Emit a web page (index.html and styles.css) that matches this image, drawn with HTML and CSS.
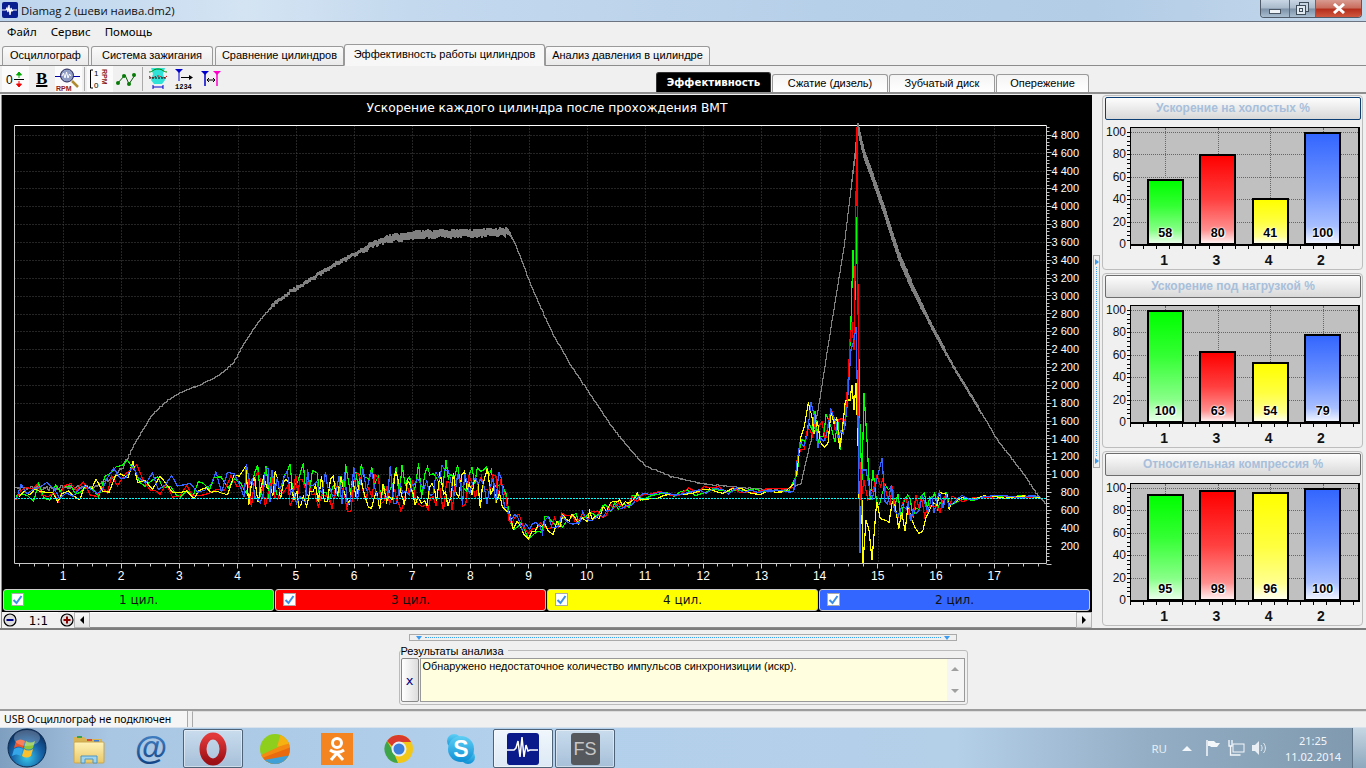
FILE: index.html
```html
<!DOCTYPE html>
<html lang="ru">
<head>
<meta charset="utf-8">
<title>Diamag 2</title>
<link rel="stylesheet" href="styles.css">
</head>
<body>
<div class="app">
  <header class="titlebar">
    <svg class="app-icon" width="16" height="16" viewBox="0 0 16 16"><rect width="16" height="16" rx="2" fill="#0a1f8f"/><path d="M0 8h4l1-2 1 4 1-7 1 10 1-7 1 3 1-1h4" fill="none" stroke="#fff" stroke-width="1.2"/></svg>
    <span class="title-text">Diamag 2 (шеви наива.dm2)</span>
    <div class="win-controls">
      <div class="wc wc-min"><i></i></div>
      <div class="wc wc-max"><svg width="13" height="13" viewBox="0 0 13 13"><rect x="3.500" y=".5" width="9" height="9" fill="#c6d3e0" stroke="#3f4c5a"/><rect x=".5" y="3.500" width="9" height="9" fill="#dfe7ef" stroke="#3f4c5a"/><rect x="3.500" y="6.500" width="3" height="3" fill="none" stroke="#3f4c5a"/></svg></div>
      <div class="wc wc-close"><svg width="14" height="11" viewBox="0 0 14 11"><path d="M2 1l10 9M12 1L2 10" stroke="#fff" stroke-width="3"/></svg></div>
    </div>
  </header>
  <nav class="menu"><span>Файл</span><span>Сервис</span><span>Помощь</span></nav>
  <div class="tabs">
    <div class="tab t1">Осциллограф</div>
    <div class="tab t2">Система зажигания</div>
    <div class="tab t3">Сравнение цилиндров</div>
    <div class="tab active t4">Эффективность работы цилиндров</div>
    <div class="tab t5">Анализ давления в цилиндре</div>
  </div>
  <div class="toolbar">
    <div class="tool on">
      <svg width="20" height="20" viewBox="0 0 20 20"><text x="1" y="15" class="ti-zero">0</text><path d="M9 10.500h10" stroke="#000"/><path d="M14 9V4M11.500 6L14 3l2.500 3z" fill="#0a0" stroke="#0a0"/><path d="M14 12v5M11.500 15l2.500 3 2.500-3z" fill="#e00" stroke="#e00"/></svg>
    </div>
    <div class="tool"><span class="ti-b">B</span></div>
    <div class="tool on">
      <svg width="26" height="26" viewBox="0 0 26 26"><path d="M0 10.500h25" stroke="#00a"/><circle cx="12" cy="9.500" r="6.500" fill="#8f9cc4" stroke="#225"/><path d="M7 10l1.500-3 1.500 5 1.500-6 1.500 6 1.500-4 1.500 2" fill="none" stroke="#fff"/><path d="M17 15l6 6" stroke="#b08a30" stroke-width="2.500"/><text x="1" y="25" class="ti-rpm">RPM</text></svg>
    </div>
    <i class="tsep"></i>
    <div class="tool on">
      <svg width="24" height="24" viewBox="0 0 24 24"><path d="M5 3H2.500v18H5" fill="none" stroke="#000"/><text x="6" y="9" class="ti-small">1</text><text x="6" y="21" class="ti-small">0</text><text x="0" y="0" transform="translate(14 2) rotate(90)" class="ti-rot">RPM</text></svg>
    </div>
    <div class="tool">
      <svg width="22" height="20" viewBox="0 0 22 20"><path d="M2 15L10 6l4 9 6-9" fill="none" stroke="#0a5a0a"/><circle cx="3" cy="14" r="2" fill="#087a08"/><circle cx="9" cy="7" r="2" fill="#087a08"/><circle cx="14" cy="15" r="2" fill="#087a08"/><circle cx="19" cy="6" r="2" fill="#087a08"/></svg>
    </div>
    <i class="tsep"></i>
    <div class="tool">
      <svg width="20" height="24" viewBox="0 0 20 24"><path d="M3 1h14l-2 6 2 6-3 4H6l-3-4 2-6z" fill="#2fe3d8"/><path d="M1 5c4 0 4-3 9-3s5 3 9 3" fill="none" stroke="#080"/><path d="M1 9c4 4 5 0 9 0s5 4 9 0" fill="none" stroke="#d00" stroke-dasharray="2 1"/><path d="M1 11h18" stroke="#000" stroke-dasharray="2 1"/><path d="M5 20h10M5 18v4M15 18v4" stroke="#00c"/></svg>
    </div>
    <div class="tool">
      <svg width="22" height="22" viewBox="0 0 22 22"><path d="M2 1h8L6 5z" fill="#00c"/><path d="M6 4v9" stroke="#00c"/><path d="M8 9.500h9" stroke="#000"/><path d="M16 7l4 2.500-4 2.500z"/><text x="2" y="21" class="ti-num">1234</text></svg>
    </div>
    <div class="tool">
      <svg width="22" height="22" viewBox="0 0 22 22"><path d="M1 3h8L5 7z" fill="#00c"/><path d="M5 6v12" stroke="#00c" stroke-width="1.500"/><path d="M13 3h8l-4 4z" fill="#f0c"/><path d="M17 6v12" stroke="#f0c" stroke-width="1.500"/><path d="M7 12h8M9 10l-2 2 2 2M13 10l2 2-2 2" fill="none" stroke="#000"/></svg>
    </div>
    <div class="subtabs">
      <div class="subtab sub-active">Эффективность</div>
      <div class="subtab s2">Сжатие (дизель)</div>
      <div class="subtab s3">Зубчатый диск</div>
      <div class="subtab s4">Опережение</div>
    </div>
  </div>

  <main class="workspace">
    <div class="left">
      <div class="chart">
        <svg id="plot" class="plot-svg" width="1090" height="494" viewBox="2 95 1090 494"></svg>
        <div class="legend">
          <div class="leg green"><span class="check"><svg width="11" height="10" viewBox="0 0 11 10"><path d="M1.500 5l3 3 5-7" fill="none" stroke="#3b8fe8" stroke-width="2"/></svg></span>1 цил.</div>
          <div class="leg red"><span class="check"><svg width="11" height="10" viewBox="0 0 11 10"><path d="M1.500 5l3 3 5-7" fill="none" stroke="#3b8fe8" stroke-width="2"/></svg></span>3 цил.</div>
          <div class="leg yellow"><span class="check"><svg width="11" height="10" viewBox="0 0 11 10"><path d="M1.500 5l3 3 5-7" fill="none" stroke="#3b8fe8" stroke-width="2"/></svg></span>4 цил.</div>
          <div class="leg blue"><span class="check"><svg width="11" height="10" viewBox="0 0 11 10"><path d="M1.500 5l3 3 5-7" fill="none" stroke="#3b8fe8" stroke-width="2"/></svg></span>2 цил.</div>
        </div>
      </div>
      <div class="scrollrow">
        <svg class="zoom-btn" width="14" height="14" viewBox="0 0 14 14"><circle cx="7" cy="7" r="6" fill="#ddd" stroke="#000" stroke-width="1.200"/><path d="M3.500 7h7" stroke="#008" stroke-width="2"/></svg>
        <div class="ratio">1:1</div>
        <svg class="zoom-btn" width="14" height="14" viewBox="0 0 14 14"><circle cx="7" cy="7" r="6" fill="#ddd" stroke="#000" stroke-width="1.200"/><path d="M3.500 7h7M7 3.500v7" stroke="#800" stroke-width="2"/></svg>
        <div class="sb-btn"><i class="arrow-l"></i></div>
        <div class="sb-track"></div>
        <div class="sb-btn"><i class="arrow-r"></i></div>
      </div>
    </div>

    <div class="vsplit"><i class="mark-r"></i><i class="dots"></i><i class="mark-r"></i></div>

    <aside class="gauges">
      <section class="gauge">
        <h3 class="gauge-title focus">Ускорение на холостых %</h3>
        <div class="gauge-body">
          <div class="yaxis"><span>100</span><span>80</span><span>60</span><span>40</span><span>20</span><span>0</span></div>
          <div class="yticks"></div>
          <div class="plotbox">
            <div class="hgrid"><i></i><i></i><i></i><i></i><i></i></div>
            <div class="bars">
              <div class="slot"><div class="bar b-green" style="height:58%"><b>58</b></div></div>
              <div class="slot"><div class="bar b-red" style="height:80%"><b>80</b></div></div>
              <div class="slot"><div class="bar b-yellow" style="height:41%"><b>41</b></div></div>
              <div class="slot"><div class="bar b-blue" style="height:100%"><b>100</b></div></div>
            </div>
          </div>
        </div>
        <div class="xticks"></div>
        <div class="cats"><span>1</span><span>3</span><span>4</span><span>2</span></div>
      </section>
      <section class="gauge">
        <h3 class="gauge-title">Ускорение под нагрузкой %</h3>
        <div class="gauge-body">
          <div class="yaxis"><span>100</span><span>80</span><span>60</span><span>40</span><span>20</span><span>0</span></div>
          <div class="yticks"></div>
          <div class="plotbox">
            <div class="hgrid"><i></i><i></i><i></i><i></i><i></i></div>
            <div class="bars">
              <div class="slot"><div class="bar b-green" style="height:100%"><b>100</b></div></div>
              <div class="slot"><div class="bar b-red" style="height:63%"><b>63</b></div></div>
              <div class="slot"><div class="bar b-yellow" style="height:54%"><b>54</b></div></div>
              <div class="slot"><div class="bar b-blue" style="height:79%"><b>79</b></div></div>
            </div>
          </div>
        </div>
        <div class="xticks"></div>
        <div class="cats"><span>1</span><span>3</span><span>4</span><span>2</span></div>
      </section>
      <section class="gauge">
        <h3 class="gauge-title">Относительная компрессия %</h3>
        <div class="gauge-body">
          <div class="yaxis"><span>100</span><span>80</span><span>60</span><span>40</span><span>20</span><span>0</span></div>
          <div class="yticks"></div>
          <div class="plotbox">
            <div class="hgrid"><i></i><i></i><i></i><i></i><i></i></div>
            <div class="bars">
              <div class="slot"><div class="bar b-green" style="height:95%"><b>95</b></div></div>
              <div class="slot"><div class="bar b-red" style="height:98%"><b>98</b></div></div>
              <div class="slot"><div class="bar b-yellow" style="height:96%"><b>96</b></div></div>
              <div class="slot"><div class="bar b-blue" style="height:100%"><b>100</b></div></div>
            </div>
          </div>
        </div>
        <div class="xticks"></div>
        <div class="cats"><span>1</span><span>3</span><span>4</span><span>2</span></div>
      </section>
    </aside>
  </main>

  <div class="results-area">
    <div class="hsplit"><i class="mark-d"></i><i class="hdots"></i><i class="mark-d"></i></div>
    <div class="group">
      <span class="group-label">Результаты анализа</span>
      <div class="group-row">
        <div class="x-btn">x</div>
        <div class="memo">
          <div class="memo-text">Обнаружено недостаточное количество импульсов синхронизиции (искр).</div>
          <div class="memo-sb"><i class="arrow-u"></i><i class="arrow-d"></i></div>
        </div>
      </div>
    </div>
  </div>

  <footer class="status">
    <div class="st-main">USB Осциллограф не подключен</div>
    <div class="st-rest"></div>
  </footer>

  <div class="taskbar">
    <div class="orb">
      <svg width="40" height="40" viewBox="0 0 40 40">
        <defs><radialGradient id="og" cx=".5" cy=".75" r=".7"><stop offset="0" stop-color="#37c6e8"/><stop offset=".55" stop-color="#1763a8"/><stop offset="1" stop-color="#0b2f5f"/></radialGradient></defs>
        <circle cx="20" cy="20" r="19" fill="url(#og)" stroke="#0e2a4c"/>
        <path d="M9 13c3-2 6-2 9 0l-2 7c-3-2-6-2-9 0z" fill="#f0562a"/>
        <path d="M19 13c3 2 6 2 9 0l-2 7c-3 2-6 2-9 0z" fill="#8cc63f"/>
        <path d="M7 21c3-2 6-2 9 0l-2 7c-3-2-6-2-9 0z" fill="#35a7e8"/>
        <path d="M17 21c3 2 6 2 9 0l-2 7c-3 2-6 2-9 0z" fill="#fbc02d"/>
        <ellipse cx="20" cy="10" rx="13" ry="8" fill="#fff" opacity=".25"/>
      </svg>
    </div>
    <div class="tb-item">
      <svg width="32" height="30" viewBox="0 0 32 30">
        <defs><linearGradient id="fg" x1="0" x2="0" y1="0" y2="1"><stop offset="0" stop-color="#fff3b8"/><stop offset="1" stop-color="#e9c766"/></linearGradient></defs>
        <path d="M1 3h10l2 2h16v10H1z" fill="#d9b453"/>
        <rect x="4" y="2" width="5" height="2" fill="#3aa24a"/><rect x="14" y="5" width="5" height="2" fill="#d94a3a"/><rect x="21" y="6" width="5" height="2" fill="#3a7ad9"/>
        <rect x="1" y="8" width="30" height="21" rx="1" fill="url(#fg)" stroke="#caa64e"/>
        <path d="M8 22h16v7h-4v-4h-8v4H8z" fill="#9fd4ef" stroke="#4e95c2"/>
      </svg>
    </div>
    <div class="tb-item">
      <svg class="at-icon" width="44" height="38" viewBox="0 0 44 38">
        <defs><linearGradient id="ag" x1="0" x2="0" y1="0" y2="1"><stop offset="0" stop-color="#4a8ccf"/><stop offset="1" stop-color="#0f3f80"/></linearGradient></defs>
        <text x="22" y="29" text-anchor="middle" class="ti-at" fill="url(#ag)">@</text>
      </svg>
    </div>
    <div class="tb-item running">
      <svg width="28" height="34" viewBox="0 0 28 34">
        <defs><linearGradient id="opg" x1="0" x2="0" y1="0" y2="1"><stop offset="0" stop-color="#e23a3a"/><stop offset="1" stop-color="#9c0f14"/></linearGradient></defs>
        <ellipse cx="14" cy="17" rx="10" ry="13" fill="none" stroke="url(#opg)" stroke-width="7"/>
      </svg>
    </div>
    <div class="tb-item">
      <svg width="32" height="32" viewBox="0 0 32 32">
        <defs><clipPath id="bc"><circle cx="16" cy="16" r="15"/></clipPath></defs>
        <g clip-path="url(#bc)"><rect width="32" height="32" fill="#8ecf1e"/><path d="M0 23L32 8v8L4 32H0z" fill="#f58a12"/><path d="M22 0h10v10L18 14z" fill="#f5b211"/><path d="M0 32V26l32-12v18z" fill="#e96a0f"/><path d="M0 28l32-6v10H0z" fill="#3fa0d8"/></g>
      </svg>
    </div>
    <div class="tb-item">
      <div class="ok-logo">
        <svg width="32" height="32" viewBox="0 0 32 32"><rect width="32" height="32" fill="#f48420"/><circle cx="16" cy="10" r="4.500" fill="none" stroke="#fff" stroke-width="3"/><path d="M9 17c4 3 10 3 14 0M16 20l-6 7M16 20l6 7" fill="none" stroke="#fff" stroke-width="3"/></svg>
      </div>
    </div>
    <div class="tb-item">
      <svg width="30" height="30" viewBox="0 0 30 30">
        <circle cx="15" cy="15" r="14" fill="#f2c718"/>
        <path d="M15 1a14 14 0 0 1 12.100 7H15a7 7 0 0 0-6.500 4.500L3 7a14 14 0 0 1 12-6z" fill="#d93a2c"/>
        <path d="M3 7l6 10 5 12A14 14 0 0 1 3 7z" fill="#3ea44a"/>
        <circle cx="15" cy="15" r="6.500" fill="#3b7fdb" stroke="#e8eef6" stroke-width="2"/>
      </svg>
    </div>
    <div class="tb-item">
      <svg width="30" height="32" viewBox="0 0 30 32">
        <defs><linearGradient id="sk" x1="0" x2="0" y1="0" y2="1"><stop offset="0" stop-color="#5fd0f5"/><stop offset="1" stop-color="#0e8fd4"/></linearGradient></defs>
        <circle cx="8" cy="8" r="7" fill="url(#sk)"/><circle cx="22" cy="24" r="7" fill="url(#sk)"/><circle cx="15" cy="16" r="13" fill="url(#sk)"/>
        <text x="15" y="24" text-anchor="middle" class="ti-s">S</text>
      </svg>
    </div>
    <div class="tb-item running active-app">
      <svg width="32" height="32" viewBox="0 0 32 32"><rect width="32" height="32" rx="3" fill="#0a1a8a"/><path d="M0 17h7l2-2 2-7 2 16 2-20 2 20 2-12 2 6 2-1 8 0" fill="none" stroke="#fff" stroke-width="1.500"/></svg>
    </div>
    <div class="tb-item running">
      <div class="fs-logo">FS</div>
    </div>
    <div class="tray">
      <span class="lang">RU</span>
      <i class="tray-up"></i>
      <svg width="16" height="18" viewBox="0 0 16 18"><path d="M2 1v16" stroke="#f4f7fa" stroke-width="1.500"/><path d="M3 2h6l2 2h4l-3 4H6L5 7H3z" fill="#f4f7fa"/></svg>
      <svg width="18" height="18" viewBox="0 0 18 18"><rect x="6" y="5" width="11" height="8" fill="none" stroke="#f4f7fa"/><path d="M2 1v6h3V1M3.500 7v9h10" fill="none" stroke="#f4f7fa" stroke-width="1.300"/></svg>
      <svg width="18" height="18" viewBox="0 0 18 18"><path d="M1 6h3l4-4v14l-4-4H1z" fill="#e8eef4"/><path d="M10 6c1.500 2 1.500 4 0 6M12.500 4c2.500 3 2.500 7 0 10" fill="none" stroke="#e8eef4"/></svg>
      <div class="clock"><span>21:25</span><span>11.02.2014</span></div>
      <div class="show-desktop"></div>
    </div>
  </div>
</div>
<script src="app.js"></script>
</body>
</html>
```
FILE: styles.css
```css
* { box-sizing: border-box; }
html, body { margin: 0; padding: 0; height: 100%; overflow: hidden; }
body { font-family: "Liberation Sans", "Noto Sans", sans-serif; font-size: 11px; color: #000; background: #f0f0f0; }
.app { width: 1366px; height: 768px; display: flex; flex-direction: column; }

.titlebar { height: 22px; display: flex; align-items: center; padding-left: 2px; border-bottom: 1px solid #6b7480; flex: none;
  background: linear-gradient(90deg, #bcd4ec 0%, #d4e4f3 18%, #c4d9ee 30%, #b7d0e9 60%, #b3cde7 80%, #c3d7ea 100%); position: relative; }
.app-icon { margin-top: -1px; }
.title-text { margin-left: 3px; font-size: 11.400px; font-family: "Open Sans", "Noto Sans", sans-serif; color: #111; line-height: 20px; }
.win-controls { position: absolute; right: 4px; top: 0; width: 102px; height: 18px; display: flex; border: 1px solid #4f5b69; border-top: 0; border-radius: 0 0 4px 4px; overflow: hidden; }
.wc { display: flex; align-items: center; justify-content: center; }
.wc-min, .wc-max { background: linear-gradient(#c9d6e4 0%, #a9bacb 48%, #7d91a7 52%, #a9bdd0 100%); border-right: 1px solid #5d6a7a; }
.wc-min { width: 29px; } .wc-max { width: 26px; }
.wc-close { flex: 1; background: linear-gradient(#d99a90 0%, #c96f60 45%, #b5301c 55%, #d0573f 100%); }
.wc-min i { width: 12px; height: 5px; margin-top: 5px; background: #eef3f8; border: 1px solid #4a5663; }

.menu { height: 21px; display: flex; background: #f0f0f0; padding: 0 0 0 7px; gap: 14px; font: 11.500px/20px "Noto Sans", sans-serif; flex: none; }
.tabs { height: 23px; display: flex; align-items: flex-end; border-bottom: 1px solid #8c8c8c; padding-left: 2px; background: #f0f0f0; flex: none; }
.tab { height: 20px; margin-bottom: -1px; border: 1px solid #9a9a9a; border-bottom: 1px solid #8c8c8c; border-radius: 3px 3px 0 0; background: linear-gradient(#fafafa, #eaeaea); text-align: center; line-height: 17px; white-space: nowrap; }
.t1 { width: 87px; } .t2 { width: 122px; margin-left: 2px; } .t3 { width: 129px; margin-left: 2px; }
.t4 { width: 201px; height: 22px; line-height: 18px; background: #f7f7f7; border-bottom-color: #f7f7f7; }
.t5 { width: 165px; }

.toolbar { height: 28px; display: flex; align-items: stretch; padding-left: 2px; border-bottom: 2px solid #8e8e8e; background: #f0f0f0; position: relative; flex: none; }
.tool { width: 26.500px; display: flex; align-items: center; justify-content: center; }
.tool.on { background: #fbfbfb; }
.tsep { width: 1px; margin: 1px 2px; background: #aaa; }
.subtabs { margin-left: auto; margin-right: 277px; align-self: flex-end; display: flex; gap: 1px; align-items: flex-end; }
.subtab { height: 18px; border: 1px solid #9a9a9a; border-bottom: 0; border-radius: 3px 3px 0 0; background: linear-gradient(#f4f4f4, #fff); text-align: center; line-height: 17px; white-space: nowrap; }
.sub-active { height: 20px; width: 115px; background: #000; color: #fff; font-weight: 700; font-family: "DejaVu Sans", sans-serif; font-size: 10.200px; line-height: 20px; border-color: #333; }
.s2 { width: 116px; } .s3 { width: 106px; } .s4 { width: 93px; }
.ti-zero { font: 12px "Liberation Sans", sans-serif; }
.ti-b { font: 700 17px "Liberation Serif", serif; text-decoration: underline; text-decoration-thickness: 2px; line-height: 20px; }
.ti-rpm { font: 700 7px "Liberation Sans", sans-serif; fill: #8b1a1a; }
.ti-small { font: 8px "Liberation Sans", sans-serif; }
.ti-rot { font: 700 7px "Liberation Sans", sans-serif; fill: #8b1a1a; }
.ti-num { font: 700 7px "Liberation Mono", monospace; }
.at-icon { flex: none; margin: 0 -4px; }
.ti-at { font: 700 33px "Liberation Sans", sans-serif; }
.ti-s { font: 700 23px "Liberation Sans", sans-serif; fill: #fff; }

.workspace { height: 536px; display: flex; padding: 1px 3px 0 2px; border-bottom: 2px solid #7c7c7c; background: #f0f0f0; flex: none; }
.left { width: 1090px; display: flex; flex-direction: column; box-shadow: -1px 0 0 #8a8a8a; }
.chart { background: #000; height: 517px; display: flex; flex-direction: column; }
.plot-svg { display: block; flex: none; }
.plot-svg text { font-family: "Liberation Sans", sans-serif; font-size: 12px; fill: #fff; }
.plot-svg .chart-title { font-family: "DejaVu Sans", sans-serif; font-size: 12.300px; }
.plot-svg .val-label { font-size: 11px; }
.legend { display: flex; height: 22px; gap: 1px; padding: 0 2px 0 1px; }
.leg { flex: 1; height: 22px; border: 1px solid #ccc; border-radius: 3px; position: relative; text-align: center; font: 12px/21px "DejaVu Sans", sans-serif; color: #111; }
.leg.green { background: #00ff00; } .leg.red { background: #ff0000; } .leg.yellow { background: #ffff00; } .leg.blue { background: #3366ff; }
.check { position: absolute; left: 7px; top: 3px; width: 13px; height: 13px; background: #fff; border: 1px solid #aaa; display: flex; align-items: center; justify-content: center; }
.scrollrow { height: 16px; display: flex; align-items: center; background: #f0f0f0; }
.zoom-btn { margin: 0 0 0 2px; flex: none; }
.zoom-btn:first-child { margin-left: 1px; }
.ratio { width: 39px; height: 16px; margin-left: 2px; text-align: center; font: 12px/17px "DejaVu Sans", sans-serif; background: #f0f0f0; border-top: 1px solid #fff; }
.sb-btn { width: 16px; height: 16px; background: linear-gradient(#f8f8f8, #e4e4e4); border: 1px solid #b5b5b5; display: flex; align-items: center; justify-content: center; flex: none; }
.sb-track { flex: 1; height: 16px; background: #f0f0f0; border-top: 1px solid #fff; border-bottom: 1px solid #8a8a8a; }
.arrow-l { border: 4px solid transparent; border-right: 4px solid #000; border-left: 0; }
.arrow-r { border: 4px solid transparent; border-left: 4px solid #000; border-right: 0; }

.vsplit { width: 7px; height: 213px; margin: 160px 0 0 1px; border: 1px solid #aaa; display: flex; flex-direction: column; align-items: center; justify-content: space-between; flex: none; padding: 3px 0; }
.mark-r { border: 3px solid transparent; border-left: 4px solid #3b9bf0; border-right: 0; }
.dots { flex: 1; width: 1px; border-left: 1px dotted #3b9bf0; margin: 2px 0; }

.gauges { margin-left: 2px; width: 261px; display: flex; flex-direction: column; gap: 3px; }
.gauge { height: 175px; border: 1px solid #bdbdbd; border-radius: 4px; padding: 1px 1px 0 2px; display: flex; flex-direction: column; background: #f0f0f0; }
.gauge-title { margin: 0; height: 23px; width: 256px; border: 1px solid #6d6d6d; border-radius: 2px; background: linear-gradient(#fdfdfd, #d8d8d8); color: #a7bfdb; text-align: center; font: 700 12px/21px "Liberation Sans", sans-serif; }
.gauge-title.focus { border-color: #0e3f74; }
.gauge-body { display: flex; margin-top: 7px; height: 119px; }
.yaxis { width: 21px; height: 124px; margin-top: -1px; display: flex; flex-direction: column; justify-content: space-between; align-items: flex-end; font: 12px/12px "Liberation Sans", sans-serif; color: #111; }
.yticks { width: 3px; margin-left: 1px; height: 112px; margin-top: 5px; background: repeating-linear-gradient(#000 0 1px, transparent 1px 4.480px); }
.plotbox { width: 230px; height: 119px; position: relative; background: #c0c0c0; border: solid #000; border-width: 1px 2px 2px 1px; margin-left: 0; }
.hgrid { position: absolute; left: 0; right: 0; bottom: 0; height: 112px; display: flex; flex-direction: column; }
.hgrid i { flex: 1; border-top: 1px dotted #666; }
.bars { position: absolute; left: 8px; right: 9px; bottom: 0; height: 112px; display: flex; }
.slot { flex: 1; height: 100%; display: flex; align-items: flex-end; justify-content: center; position: relative; }
.slot::before { content: ""; position: absolute; left: 50%; top: -4px; bottom: 0; border-left: 1px dotted #666; }
.bar { width: 37px; border: 2px solid #000; border-bottom-width: 1px; position: relative; display: flex; align-items: flex-end; justify-content: center; }
.bar b { font: 700 12.500px/19px "Liberation Sans", sans-serif; color: #000; text-shadow: 0 0 2px #fff, 0 0 2px #fff, 1px 1px 1px #fff; }
.b-green { background: linear-gradient(#00ff00 0%, #33ff33 40%, #88ff88 80%, #eaffea 100%); }
.b-red { background: linear-gradient(#ff0000 0%, #ff4040 50%, #ff9090 85%, #fff0f0 100%); }
.b-yellow { background: linear-gradient(#ffff00 0%, #ffff40 50%, #ffff90 85%, #fffff0 100%); }
.b-blue { background: linear-gradient(#3366ff 0%, #6f94ff 50%, #a9c0ff 85%, #f0f4ff 100%); }
.xticks { margin-left: 25px; width: 230px; height: 3px; background: repeating-linear-gradient(90deg, #000 0 1px, transparent 1px 13.100px); }
.cats { margin-left: 33px; width: 209px; display: flex; margin-top: 3px; }
.cats span { flex: 1; text-align: center; font: 700 14px/16px "Liberation Sans", sans-serif; color: #111; }

.results-area { height: 81px; display: flex; flex-direction: column; align-items: center; background: #f0f0f0; border-bottom: 2px solid #9c9c9c; flex: none; }
.hsplit { width: 548px; height: 7px; margin-top: 4px; border: 1px solid #aaa; display: flex; align-items: center; justify-content: space-between; padding: 0 3px; }
.mark-d { border: 3px solid transparent; border-top: 4px solid #3b9bf0; border-bottom: 0; margin-left: 3px; margin-right: 3px; }
.hdots { flex: 1; height: 1px; border-top: 1px dotted #3b9bf0; }
.group { width: 569px; height: 55px; margin-top: 9px; border: 1px solid #bbb; border-radius: 3px; position: relative; padding: 7px 2px 0 1px; }
.group-label { position: absolute; left: 1px; top: -7px; padding-right: 4px; background: #f0f0f0; font-size: 11px; line-height: 14px; }
.group-row { display: flex; gap: 1px; height: 44px; }
.x-btn { width: 18px; border: 1px solid #888; border-radius: 2px; background: linear-gradient(90deg, #fff, #ddd); text-align: center; color: #008; font: 13px/44px "DejaVu Sans", sans-serif; }
.memo { flex: 1; display: flex; border: 1px solid #999; background: #ffffdf; }
.memo-text { flex: 1; padding: 0 2px; font-size: 10.900px; line-height: 14px; }
.memo-sb { width: 17px; background: #f5f5f5; display: flex; flex-direction: column; align-items: center; justify-content: space-between; padding: 8px 0 8px; }
.arrow-u { border: 4px solid transparent; border-bottom: 4px solid #a0a0a0; border-top: 0; }
.arrow-d { border: 4px solid transparent; border-top: 4px solid #a0a0a0; border-bottom: 0; }

.status { height: 16px; display: flex; gap: 4px; background: #f0f0f0; flex: none; }
.st-main { width: 188px; padding-left: 4px; font: 10.500px/16px "Noto Sans", sans-serif; background: #f5f5f5; border-right: 1px solid #aaa; }
.st-rest { flex: 1; border-left: 1px solid #aaa; border-top: 1px solid #ddd; }

.taskbar { height: 41px; flex: none; display: flex; padding-left: 59px; gap: 2px; position: relative; border-top: 1px solid #d7e2ec;
  background: linear-gradient(90deg, #7f9fc0 0, #a9c6e3 8%, #b3d0ec 40%, #b4cfe8 70%, #93aec5 84%, #7f98ad 100%); }
.orb { position: absolute; left: 7px; top: 0; width: 40px; height: 40px; }
.tb-item { width: 60px; height: 39px; margin-top: 1px; display: flex; align-items: center; justify-content: center; border: 1px solid transparent; border-radius: 2px; }
.tb-item.running { border-color: #4f6378; background: linear-gradient(#c9dcee, #a7c0d8); box-shadow: inset 0 0 0 1px rgba(255,255,255,.45); }
.tb-item.active-app { background: linear-gradient(#f0f6fc, #dce9f5); }
.ok-logo { width: 32px; height: 32px; }
.ok-logo svg { display: block; }
.fs-logo { width: 29px; height: 32px; background: #55585c; border-radius: 3px; color: #c7c7c7; font: 400 18px/32px "Liberation Sans", sans-serif; text-align: center; }
.tray { position: absolute; right: 0; top: 0; bottom: 0; display: flex; align-items: center; gap: 6px; color: #f2f6fa; font-family: "Noto Sans", sans-serif; }
.lang { font-size: 11.500px; margin-right: 9px; color: #e6edf3; }
.tray-up { border: 5px solid transparent; border-bottom: 5px solid #f2f6fa; border-top: 0; margin-right: 7px; }
.clock { width: 60px; margin-left: 8px; margin-right: 3px; padding-top: 1px; display: flex; flex-direction: column; align-items: center; font-size: 11px; line-height: 16px; }
.show-desktop { width: 14px; height: 100%; background: linear-gradient(#c6d6e3, #8ea8bd); border-left: 1px solid #5e7488; }
```
FILE: app.js
```js
(function () {
  var svg = document.getElementById('plot');
  var NS = 'http://www.w3.org/2000/svg';
  function el(name, attrs, text) {
    var e = document.createElementNS(NS, name);
    for (var k in attrs) e.setAttribute(k, attrs[k]);
    if (text !== undefined) e.textContent = text;
    svg.appendChild(e);
    return e;
  }
  function rng(seed) {
    return function () {
      seed |= 0; seed = seed + 0x6D2B79F5 | 0;
      var t = Math.imul(seed ^ seed >>> 15, 1 | seed);
      t = t + Math.imul(t ^ t >>> 7, 61 | t) ^ t;
      return ((t ^ t >>> 14) >>> 0) / 4294967296;
    };
  }
  function lerp(a, x) {
    if (x <= a[0][0]) return a[0][1];
    for (var i = 1; i < a.length; i++) {
      if (x <= a[i][0]) {
        var p = a[i - 1], q = a[i];
        return p[1] + (q[1] - p[1]) * (x - p[0]) / (q[0] - p[0]);
      }
    }
    return a[a.length - 1][1];
  }

  var L = 14.5, R = 1046.5, T = 125.5, B = 563.5;
  var yOf = function (v) { return 563.7 - v * 0.08935; };
  var xOf = function (n) { return 63 + (n - 1) * 58.2; };

  el('text', { x: 547, y: 112, 'text-anchor': 'middle', 'class': 'chart-title' }, 'Ускорение каждого цилиндра после прохождения ВМТ');

  // grid
  var grid = '';
  for (var v = 200; v <= 4800; v += 200) grid += 'M' + L + ' ' + (Math.round(yOf(v)) + .5) + 'H' + R;
  for (var n = 1; n <= 17; n++) grid += 'M' + (Math.round(xOf(n)) + .5) + ' ' + T + 'V' + B;
  el('path', { d: grid, stroke: '#4a4a4a', 'stroke-dasharray': '1 2', fill: 'none' });

  // axes and ticks
  el('path', { d: 'M' + L + ' ' + B + 'V' + T, stroke: '#c8c8c8', fill: 'none' });
  el('path', { d: 'M' + L + ' ' + T + 'H' + R, stroke: '#fff', fill: 'none' });
  el('path', { d: 'M' + L + ' ' + B + 'H' + R + 'V' + T, stroke: '#c8c8c8', fill: 'none' });
  var ticks = '';
  for (var i = 0; i <= 122; i++) {
    var ty = Math.round(563.5 - i * 3.574) + .5;
    if (ty < T) break;
    ticks += 'M' + R + ' ' + ty + 'h' + (i % 5 === 0 ? 5 : 3);
  }
  for (var j = 0; j <= 72; j++) {
    var tx = Math.round(19 + j * 14.55) + .5;
    if (tx > R) break;
    ticks += 'M' + tx + ' ' + B + 'v' + ((j % 4 === 3) ? 5 : 3);
  }
  el('path', { d: ticks, stroke: '#c8c8c8', fill: 'none' });

  // value labels
  for (var v2 = 200; v2 <= 4800; v2 += 200) {
    var lab = v2 >= 1000 ? Math.floor(v2 / 1000) + ' ' + ('00' + (v2 % 1000)).slice(-3) : '' + v2;
    el('text', { x: 1079, y: Math.round(yOf(v2)) + 4, 'text-anchor': 'end', 'class': 'val-label' }, lab);
  }
  for (var n2 = 1; n2 <= 17; n2++) {
    el('text', { x: xOf(n2), y: 580, 'text-anchor': 'middle' }, '' + n2);
  }

  // grey reference trace
  var gA = [[15,487],[40,488],[60,487],[90,487],[110,479],[122,466],[135,441],[150,416],[165,401],[180,392],[200,384],[218,375],[232,363],[245,340],[260,318],[275,302],[290,291],[310,279],[330,266],[350,256],[370,245],[390,238],[420,234],[470,233],[508,231],[515,245],[530,285],[550,330],[570,365],[590,395],[610,425],[630,450],[645,466],[670,476],[700,483],[740,487],[780,490],[793,487],[800,483],[807,453],[817,410],[830,327],[843,247],[853,163],[857,127],[863,153],[880,200],[897,253],[913,290],[933,330],[953,367],[973,400],[997,440],[1020,470],[1037,495],[1045,503]];
  var gW = [[15,0],[262,0],[270,.5],[350,1],[385,2.5],[505,3.5],[512,0],[850,0],[856,3.5],[905,4],[930,2],[960,1],[1000,0],[1045,0]];
  var rg = rng(11), gd = '', prev = lerp(gA, 15);
  for (var gx = 15; gx <= 1045; gx++) {
    var jit = gx < 130 ? 4 : (gx > 270 && gx < 510 ? 3 : 1.2);
    var gy = Math.round(lerp(gA, gx) + (rg() - .5) * jit);
    var w = lerp(gW, gx);
    gd += 'M' + (gx + .5) + ' ' + Math.round(Math.min(gy, prev) - w) + 'V' + Math.round(Math.max(gy, prev) + w + 1);
    prev = gy;
  }
  el('path', { d: gd, stroke: '#808080', fill: 'none', 'shape-rendering': 'crispEdges' });

  // cylinder traces
  var baseA = [[15,491],[60,493],[100,488],[118,476],[130,468],[145,481],[180,490],[210,486],[238,484],[300,488],[400,488],[498,486],[505,500],[512,520],[530,529],[560,521],[590,516],[620,505],[645,496],[700,491],[760,491],[788,494],[794,490],[800,450],[805,425],[812,418],[820,440],[830,428],[840,432],[848,395],[850,380],[876,490],[885,490],[900,506],[930,506],[950,500],[1000,497],[1042,497]];
  var ampA = [[15,10],[238,11],[245,20],[498,20],[505,10],[560,10],[565,6],[640,6],[650,3.5],[788,3.5],[795,5],[804,20],[850,20],[876,16],[920,15],[950,9],[965,2.5],[1042,1]];
  function stepAt(x) {
    if (x < 240) return 6;
    if (x < 500) return 2.8;
    if (x < 640) return 3.5;
    if (x < 790) return 8;
    if (x < 950) return 3;
    return 9;
  }
  var series = [
    { c: '#00ff00', seed: 101, off: function (x) { return x > 240 && x < 500 ? -7 : (x > 640 && x < 790 ? 1 : 0); },
      peak: [[851,320],[853,250],[855,300],[856,217],[858,300],[860,430],[862,480],[864,393],[867,440],[870,500],[873,470]] },
    { c: '#ff0000', seed: 202, off: function (x) { return x > 240 && x < 500 ? 4 : (x > 640 && x < 790 ? -1 : 0); },
      peak: [[850,340],[852,322],[854,350],[856,200],[857,127],[858,300],[859,430],[861,500],[864,480],[868,500],[873,490]] },
    { c: '#ffff00', seed: 303, off: function (x) { return x > 876 && x < 930 ? 14 : (x > 510 && x < 560 ? 6 : (x > 240 && x < 500 ? 2 : 0)); },
      peak: [[850,400],[852,385],[854,410],[856,383],[858,440],[860,545],[862,500],[863,563],[866,520],[869,530],[872,560],[876,510]] },
    { c: '#3366ff', seed: 404, off: function (x) { return x > 100 && x < 240 ? -3 : (x > 240 && x < 500 ? -2 : 0); },
      peak: [[851,350],[854,340],[856,327],[858,420],[860,553],[862,470],[866,470],[872,500]] }
  ];
  series.forEach(function (s) {
    var r = rng(s.seed), pts = [], x = 15 + r() * 4;
    while (x < 849) {
      pts.push([x, lerp(baseA, x) + s.off(x) + (r() - .5) * 2 * lerp(ampA, x)]);
      x += stepAt(x) * (.7 + r() * .6);
    }
    s.peak.forEach(function (p) { pts.push(p); });
    x = 877;
    if (s.c === '#3366ff') { pts.push([882, 458]); x = 885; }
    while (x < 1043) {
      pts.push([x, lerp(baseA, x) + s.off(x) + (r() - .5) * 2 * lerp(ampA, x)]);
      x += stepAt(x) * (.7 + r() * .6);
    }
    var p = pts.map(function (q) { return q[0].toFixed(1) + ',' + q[1].toFixed(1); }).join(' ');
    el('polyline', { points: p, fill: 'none', stroke: s.c, 'stroke-width': 1.2, 'shape-rendering': 'crispEdges' });
  });

  // cyan zero line, drawn over the traces
  el('path', { d: 'M' + L + ' 498.5H' + R, stroke: '#00ffff', 'stroke-dasharray': '2 1', fill: 'none', 'shape-rendering': 'crispEdges' });
})();
```
